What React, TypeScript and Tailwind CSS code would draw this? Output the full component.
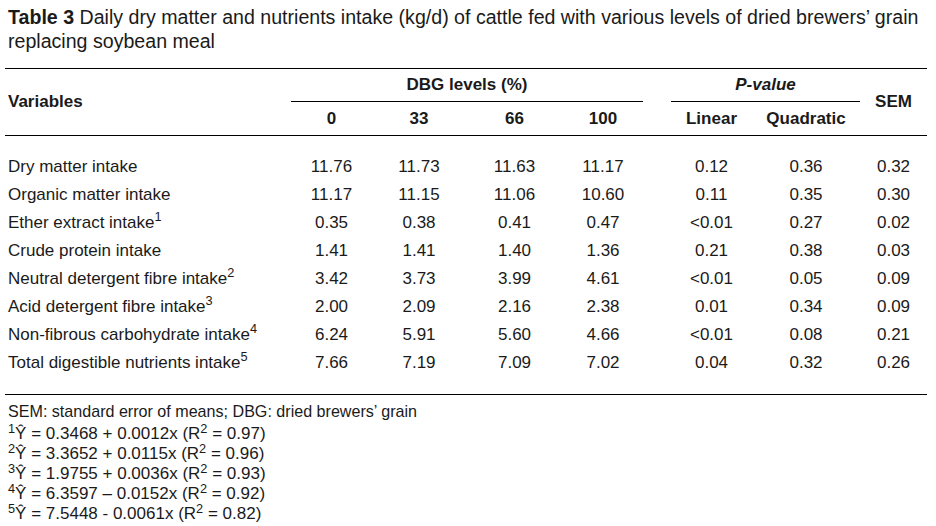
import React from 'react';

const rows: [string, string | null, string[]][] = [
  ['Dry matter intake', null, ['11.76', '11.73', '11.63', '11.17', '0.12', '0.36', '0.32']],
  ['Organic matter intake', null, ['11.17', '11.15', '11.06', '10.60', '0.11', '0.35', '0.30']],
  ['Ether extract intake', '1', ['0.35', '0.38', '0.41', '0.47', '<0.01', '0.27', '0.02']],
  ['Crude protein intake', null, ['1.41', '1.41', '1.40', '1.36', '0.21', '0.38', '0.03']],
  ['Neutral detergent fibre intake', '2', ['3.42', '3.73', '3.99', '4.61', '<0.01', '0.05', '0.09']],
  ['Acid detergent fibre intake', '3', ['2.00', '2.09', '2.16', '2.38', '0.01', '0.34', '0.09']],
  ['Non-fibrous carbohydrate intake', '4', ['6.24', '5.91', '5.60', '4.66', '<0.01', '0.08', '0.21']],
  ['Total digestible nutrients intake', '5', ['7.66', '7.19', '7.09', '7.02', '0.04', '0.32', '0.26']],
];

// footnote regressions
const equations: [string, string, string][] = [
  ['1', '0.3468 + 0.0012x', '0.97'],
  ['2', '3.3652 + 0.0115x', '0.96'],
  ['3', '1.9755 + 0.0036x', '0.93'],
  ['4', '6.3597 \u2013 0.0152x', '0.92'],
  ['5', '7.5448 - 0.0061x', '0.82'],
];

const App = () => {
  return (
    <div className="w-[936px] h-[526px] bg-white text-[#1a1a1a] overflow-hidden font-['Liberation_Sans',Arial,sans-serif]">
      <p className="pl-[8px] pr-[4px] pt-[5px] text-[19.6px] leading-[24px]">
        <span className="font-bold">Table 3</span> Daily dry matter and nutrients intake (kg/d) of cattle fed with various levels of dried brewers’ grain replacing soybean meal
      </p>

      <table className="ml-[5px] mt-[15px] w-[922px] table-fixed border-collapse text-[17px]">
        <colgroup>
          <col className="w-[286px]" />
          <col className="w-[81px]" />
          <col className="w-[94px]" />
          <col className="w-[97px]" />
          <col className="w-[80px]" />
          <col className="w-[28px]" />
          <col className="w-[81px]" />
          <col className="w-[108px]" />
          <col className="w-[67px]" />
        </colgroup>
        <thead className="font-bold">
          <tr className="h-[33px] border-t border-black">
            <th rowSpan={2} className="pl-[3px] text-left align-middle border-b border-black">Variables</th>
            <th colSpan={4} className="text-center border-b border-black">DBG levels (%)</th>
            <th></th>
            <th colSpan={2} className="text-center italic border-b border-black">P-value</th>
            <th rowSpan={2} className="text-center border-b border-black">SEM</th>
          </tr>
          <tr className="h-[34px] border-b border-black">
            <th className="text-center">0</th>
            <th className="text-center">33</th>
            <th className="text-center">66</th>
            <th className="text-center">100</th>
            <th></th>
            <th className="text-center">Linear</th>
            <th className="text-center">Quadratic</th>
          </tr>
        </thead>
        <tbody>
          <tr className="h-[17px]">
            <td colSpan={9}></td>
          </tr>
          {rows.map(([name, sup, vals]) => (
            <tr key={name} className="h-[28px]">
              <td className="pl-[3px] whitespace-nowrap">
                {name}
                {sup && <sup>{sup}</sup>}
              </td>
              {vals.slice(0, 4).map((v, i) => (
                <td key={i} className="text-center">{v}</td>
              ))}
              <td></td>
              {vals.slice(4).map((v, i) => (
                <td key={i} className="text-center">{v}</td>
              ))}
            </tr>
          ))}
          <tr className="h-[18px] border-b border-black">
            <td colSpan={9}></td>
          </tr>
        </tbody>
      </table>

      <div className="pl-[8px] pt-[6px] text-[17px] leading-[20px]">
        <p className="text-[16.1px]">SEM: standard error of means; DBG: dried brewers’ grain</p>
        <div className="mt-[3px]">
          {equations.map(([n, eq, r2]) => (
            <p key={n}>
              <sup>{n}</sup>Ŷ = {eq} (R<sup>2</sup> = {r2})
            </p>
          ))}
        </div>
      </div>
    </div>
  );
};

export default App;
